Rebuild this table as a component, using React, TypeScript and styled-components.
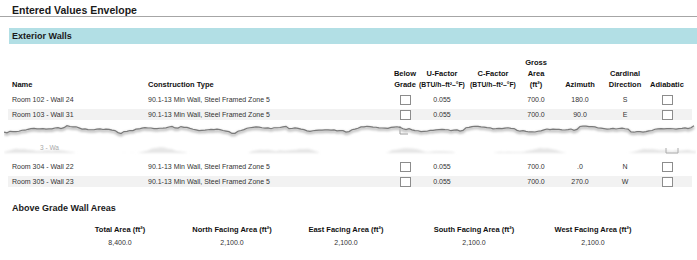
import React from 'react';
import styled, { createGlobalStyle } from 'styled-components';

const GlobalStyle = createGlobalStyle`
  body {
    margin: 0;
    background: #fff;
    font-family: "Liberation Sans", Arial, sans-serif;
    color: #222;
  }
`;

// Page title with rule under it
const Title = styled.div`
  height: 17px;
  padding: 4px 12px 0;
  box-sizing: border-box;
  font-size: 10.5px;
  font-weight: bold;
  line-height: 12px;
  color: #1a1a1a;
  border-bottom: 1px solid #a6a6a6;
`;

// Cyan section band
const SectionBand = styled.div`
  margin: 11px 0 0 9px;
  height: 16px;
  padding-left: 3px;
  background: #b2dfe5;
  font-size: 9px;
  font-weight: bold;
  line-height: 16px;
  color: #1a1a1a;
`;

const Table = styled.table`
  margin: 13px 0 0 8px;
  width: 684px;
  table-layout: fixed;
  border-collapse: collapse;
`;

const HeadCell = styled.th<{ $align?: 'left' | 'center' }>`
  padding: 0 0 2px ${(p) => (p.$align === 'left' ? '4px' : '0')};
  height: 35px;
  box-sizing: border-box;
  vertical-align: bottom;
  text-align: ${(p) => p.$align || 'center'};
  font-size: 7.5px;
  font-weight: bold;
  line-height: 11px;
  color: #111;
  white-space: nowrap;
`;

const Sub = styled.span`
  display: block;
  font-size: 6.8px;
  margin: 0 -8px;
`;

const Row = styled.tr<{ $striped?: boolean }>`
  & > td {
    background: ${(p) =>
      p.$striped
        ? 'linear-gradient(to bottom, transparent 2px, #f2f2f2 2px, #f2f2f2 13px, transparent 13px)'
        : 'transparent'};
  }
`;

const Cell = styled.td<{ $align?: 'left' | 'center' }>`
  height: 15px;
  padding: 0 0 0 ${(p) => (p.$align === 'left' ? '4px' : '0')};
  text-align: ${(p) => p.$align || 'center'};
  vertical-align: middle;
  font-size: 7px;
  line-height: 15px;
  color: #333;
  white-space: nowrap;
`;

const Check = styled.span`
  display: inline-block;
  vertical-align: middle;
  width: 11px;
  height: 10px;
  box-sizing: border-box;
  border: 1px solid #8c8c8c;
  background: #fff;
`;

const TearCell = styled.td`
  padding: 0;
  height: 37px;
`;

const TearSvg = styled.svg`
  display: block;
  width: 692px;
  height: 37px;
  margin-left: -4px;
`;

const SummaryHeading = styled.div`
  margin: 13px 0 0 12px;
  font-size: 9px;
  font-weight: bold;
  line-height: 12px;
  color: #1a1a1a;
`;

const SummaryGrid = styled.div`
  display: grid;
  grid-template-columns: 120px 104px 124px 132px 106px;
  margin: 10px 0 0 60px;
`;

const SummaryItem = styled.div`
  display: flex;
  flex-direction: column;
  align-items: center;
  gap: 2px;
`;

const SummaryLabel = styled.div`
  font-size: 7.5px;
  font-weight: bold;
  line-height: 11px;
  color: #111;
  white-space: nowrap;
`;

const SummaryValue = styled.div`
  font-size: 7px;
  line-height: 11px;
  color: #333;
`;

const TYPE = '90.1-13 Min Wall, Steel Framed Zone 5';

const topRows = [
  { name: 'Room 102 - Wall 24', az: '180.0', dir: 'S' },
  { name: 'Room 103 - Wall 31', az: '90.0', dir: 'E' },
];

const bottomRows = [
  { name: 'Room 304 - Wall 22', az: '.0', dir: 'N' },
  { name: 'Room 305 - Wall 23', az: '270.0', dir: 'W' },
];

const areas = [
  { label: 'Total Area (ft²)', value: '8,400.0' },
  { label: 'North Facing Area (ft²)', value: '2,100.0' },
  { label: 'East Facing Area (ft²)', value: '2,100.0' },
  { label: 'South Facing Area (ft²)', value: '2,100.0' },
  { label: 'West Facing Area (ft²)', value: '2,100.0' },
];

// Build the ragged torn-paper edge and the faint lower fragments
const buildTear = (width: number) => {
  let seed = 7;
  const rand = () => {
    seed = (seed * 9301 + 49297) % 233280;
    return seed / 233280;
  };
  const pts: string[] = [];
  for (let x = 0; x <= width; x += 3) {
    const y =
      6.5 +
      1.8 * Math.sin(x * 0.06 + 1) +
      1.1 * Math.sin(x * 0.17) +
      (x % 57 < 6 ? 1.6 : 0) +
      rand() * 0.9;
    pts.push(`${x},${y.toFixed(2)}`);
  }
  const edge = `M${pts.join(' L')}`;

  const low: string[] = [`0,31`];
  for (let x = 0; x <= width; x += 4) {
    const h = Math.max(0, 3.2 * Math.sin(x * 0.05) + 1.5 * Math.sin(x * 0.13) + rand() * 1.2);
    low.push(`${x},${(31 - h).toFixed(2)}`);
  }
  low.push(`${width},31`);
  return { edge, low: `M${low.join(' L')} Z` };
};

const tear = buildTear(692);

const Tear: React.FC = () => (
  <TearSvg viewBox="0 0 692 37">
    <defs>
      <filter id="soft" x="-5%" y="-50%" width="110%" height="200%">
        <feGaussianBlur stdDeviation="0.7" />
      </filter>
      <filter id="softer" x="-5%" y="-50%" width="110%" height="200%">
        <feGaussianBlur stdDeviation="1.2" />
      </filter>
    </defs>
    <path d={tear.low} fill="#e6e6e6" filter="url(#softer)" />
    <text x="36" y="28" fontSize="6.5" fill="#a8a8a8" fontFamily="Liberation Sans, Arial, sans-serif">
      3 - Wa
    </text>
    <path d="M396 4 L396 12 L404 12" fill="none" stroke="#999" strokeWidth="1" />
    <path d="M662 26 L662 31 L674 31 L674 26" fill="none" stroke="#aaa" strokeWidth="1" />
    <path d={tear.edge} fill="none" stroke="#c4c4c4" strokeWidth="3" transform="translate(0 1.5)" filter="url(#softer)" />
    <path d={tear.edge} fill="none" stroke="#7a7a7a" strokeWidth="1.2" filter="url(#soft)" />
  </TearSvg>
);

const WallRow: React.FC<{ name: string; az: string; dir: string; striped?: boolean }> = ({
  name,
  az,
  dir,
  striped,
}) => (
  <Row $striped={striped}>
    <Cell $align="left">{name}</Cell>
    <Cell $align="left">{TYPE}</Cell>
    <Cell>
      <Check />
    </Cell>
    <Cell>0.055</Cell>
    <Cell />
    <Cell>700.0</Cell>
    <Cell>{az}</Cell>
    <Cell>{dir}</Cell>
    <Cell>
      <Check />
    </Cell>
  </Row>
);

export default function App() {
  return (
    <>
      <GlobalStyle />
      <Title>Entered Values Envelope</Title>
      <SectionBand>Exterior Walls</SectionBand>

      <Table>
        <colgroup>
          <col style={{ width: 136 }} />
          <col style={{ width: 248 }} />
          <col style={{ width: 26 }} />
          <col style={{ width: 48 }} />
          <col style={{ width: 54 }} />
          <col style={{ width: 32 }} />
          <col style={{ width: 56 }} />
          <col style={{ width: 34 }} />
          <col style={{ width: 50 }} />
        </colgroup>
        <thead>
          <tr>
            <HeadCell $align="left">Name</HeadCell>
            <HeadCell $align="left">Construction Type</HeadCell>
            <HeadCell>
              Below
              <br />
              Grade
            </HeadCell>
            <HeadCell>
              U-Factor
              <Sub>(BTU/h–ft²–°F)</Sub>
            </HeadCell>
            <HeadCell>
              C-Factor
              <Sub>(BTU/h–ft²–°F)</Sub>
            </HeadCell>
            <HeadCell>
              Gross
              <br />
              Area
              <br />
              (ft²)
            </HeadCell>
            <HeadCell>Azimuth</HeadCell>
            <HeadCell>
              Cardinal
              <br />
              Direction
            </HeadCell>
            <HeadCell>Adiabatic</HeadCell>
          </tr>
        </thead>
        <tbody>
          {topRows.map((r, i) => (
            <WallRow key={r.name} {...r} striped={i % 2 === 1} />
          ))}
          <tr>
            <TearCell colSpan={9}>
              <Tear />
            </TearCell>
          </tr>
          {bottomRows.map((r, i) => (
            <WallRow key={r.name} {...r} striped={i % 2 === 1} />
          ))}
        </tbody>
      </Table>

      <SummaryHeading>Above Grade Wall Areas</SummaryHeading>
      <SummaryGrid>
        {areas.map((a) => (
          <SummaryItem key={a.label}>
            <SummaryLabel>{a.label}</SummaryLabel>
            <SummaryValue>{a.value}</SummaryValue>
          </SummaryItem>
        ))}
      </SummaryGrid>
    </>
  );
}
